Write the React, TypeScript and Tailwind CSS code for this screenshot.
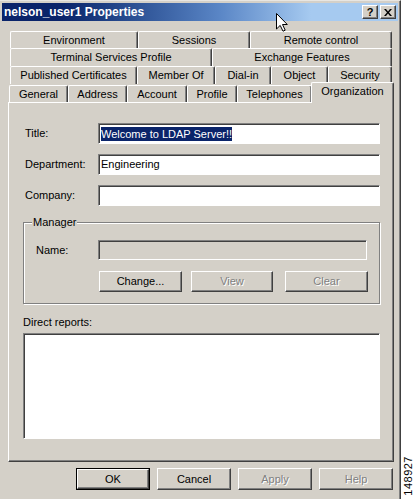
import React from 'react';

const raised =
  'border border-t-white border-l-white border-r-[#404040] border-b-[#404040] shadow-[inset_-1px_-1px_#808080]';
const sunken =
  'border border-t-[#808080] border-l-[#808080] border-r-white border-b-white shadow-[inset_1px_1px_#404040]';
const grayed = 'text-[#808080] [text-shadow:1px_1px_0_#fff]';

const tabBase =
  'flex items-center justify-center border-t border-l border-r border-t-white border-l-white border-r-[#404040] shadow-[inset_-1px_0_#808080] rounded-t-[2px] bg-[#d4d0c8]';

const tabRows = [
  [
    { label: 'Environment', w: 'w-[128px]' },
    { label: 'Sessions', w: 'w-[112px]' },
    { label: 'Remote control', w: 'w-[142px]' },
  ],
  [
    { label: 'Terminal Services Profile', w: 'w-[202px]' },
    { label: 'Exchange Features', w: 'w-[180px]' },
  ],
  [
    { label: 'Published Certificates', w: 'w-[127px]' },
    { label: 'Member Of', w: 'w-[78px]' },
    { label: 'Dial-in', w: 'w-[56px]' },
    { label: 'Object', w: 'w-[57px]' },
    { label: 'Security', w: 'w-[64px]' },
  ],
];

const frontTabs = [
  { label: 'General', w: 'w-[59px]' },
  { label: 'Address', w: 'w-[59px]' },
  { label: 'Account', w: 'w-[60px]' },
  { label: 'Profile', w: 'w-[50px]' },
  { label: 'Telephones', w: 'w-[75px]' },
];

const Cursor = () => (
  <svg width="12" height="19" viewBox="0 0 12 19" className="absolute left-[276px] top-[12px]">
    <path
      d="M0.5 0.5 L0.5 16 L4.2 12.4 L7 18.2 L9.2 17.2 L6.5 11.5 L11.3 11.5 Z"
      fill="#fff"
      stroke="#000"
      strokeWidth="1"
      strokeLinejoin="miter"
    />
  </svg>
);

const Button = ({
  label,
  w,
  disabled,
  isDefault,
}: {
  label: string;
  w: string;
  disabled?: boolean;
  isDefault?: boolean;
}) => (
  <div className={`${w} h-full ${isDefault ? 'border border-black' : ''}`}>
    <div
      className={`h-full flex items-center justify-center ${raised} ${disabled ? grayed : 'text-black'}`}
    >
      {label}
    </div>
  </div>
);

export default function App() {
  return (
    <div
      className="flex w-[415px] h-[499px] bg-white overflow-hidden text-[11px] text-black"
      style={{ fontFamily: '"Liberation Sans", Arial, sans-serif' }}
    >
      <div className="relative w-[401px] h-[499px] shrink-0 bg-[#d4d0c8] border-t border-t-[#e8e6e2] border-r border-r-[#404040] shadow-[inset_-1px_0_#808080]">
        {/* title bar */}
        <div className="mt-[2px] ml-[2px] w-[396px] h-[18px] flex items-center justify-between bg-linear-to-r from-[#0a246a] from-15% via-[#5a86c6] via-55% to-[#a6caf0] to-78% pl-[2px] pr-[2px]">
          <span className="text-white font-bold text-[12px] leading-none">nelson_user1 Properties</span>
          <div className="flex gap-[2px]">
            <div className={`w-[16px] h-[14px] bg-[#d4d0c8] flex items-center justify-center font-bold text-[11px] leading-none ${raised}`}>
              ?
            </div>
            <div className={`w-[16px] h-[14px] bg-[#d4d0c8] flex items-center justify-center ${raised}`}>
              <svg width="8" height="7" viewBox="0 0 8 7">
                <path d="M0 0 L2 0 L4 2.5 L6 0 L8 0 L5 3.5 L8 7 L6 7 L4 4.5 L2 7 L0 7 L3 3.5 Z" fill="#000" />
              </svg>
            </div>
          </div>
        </div>

        <Cursor />

        {/* tabs */}
        <div className="mt-[10px]">
          {tabRows.map((row, i) => (
            <div key={i} className={`flex ml-[10px] ${i === 0 ? 'h-[17px]' : 'h-[18px]'}`}>
              {row.map((t) => (
                <div key={t.label} className={`${tabBase} ${t.w} h-full`}>
                  {t.label}
                </div>
              ))}
            </div>
          ))}
          <div className="flex items-end h-[18px] ml-[9px]">
            {frontTabs.map((t) => (
              <div key={t.label} className={`${tabBase} ${t.w} h-[17px]`}>
                {t.label}
              </div>
            ))}
            <div className={`${tabBase} relative z-10 w-[83px] h-[21px] -mb-px -ml-[1px] pb-[3px]`}>
              Organization
            </div>
          </div>
        </div>

        {/* panel */}
        <div className={`ml-[8px] w-[386px] h-[360px] pt-[20px] pl-[14px] pr-[13px] ${raised}`}>
          {[
            { label: 'Title:', value: 'Welcome to LDAP Server!!', selected: true },
            { label: 'Department:', value: 'Engineering' },
            { label: 'Company:', value: '' },
          ].map((f, i) => (
            <div key={f.label} className={`flex items-center h-[21px] ${i > 0 ? 'mt-[10px]' : ''}`}>
              <span className="w-[75px] pl-[2px]">{f.label}</span>
              <div className={`flex-1 h-full bg-white flex items-center pl-[2px] ${sunken}`}>
                {f.selected ? (
                  <span className="bg-[#0a246a] text-white leading-[14px]">{f.value}</span>
                ) : (
                  <span>{f.value}</span>
                )}
              </div>
            </div>
          ))}

          {/* manager group */}
          <div className="relative mt-[16px] h-[82px] border border-[#808080] shadow-[1px_1px_0_#fff,inset_1px_1px_0_#fff] pt-[17px]">
            <span className="absolute -top-[8px] left-[8px] px-[1px] bg-[#d4d0c8] leading-[14px]">Manager</span>
            <div className="flex items-center h-[20px] pr-[12px]">
              <span className="w-[74px] pl-[12px]">Name:</span>
              <div className={`flex-1 h-full ${sunken}`} />
            </div>
            <div className="flex h-[21px] mt-[11px] pl-[75px]">
              <Button label="Change..." w="w-[83px]" />
              <div className="w-[9px]" />
              <Button label="View" w="w-[82px]" disabled />
              <div className="w-[12px]" />
              <Button label="Clear" w="w-[83px]" disabled />
            </div>
          </div>

          <div className="mt-[12px] leading-[13px]">Direct reports:</div>
          <div className={`mt-[4px] h-[106px] bg-white ${sunken}`} />
        </div>

        {/* footer buttons */}
        <div className="flex justify-end gap-[7px] ml-[8px] w-[386px] h-[22px] mt-[6px] pr-[1px]">
          <Button label="OK" w="w-[74px]" isDefault />
          <Button label="Cancel" w="w-[74px]" />
          <Button label="Apply" w="w-[74px]" disabled />
          <Button label="Help" w="w-[74px]" disabled />
        </div>
      </div>

      <div className="flex-1 flex items-end justify-center pb-[3px]">
        <span className="[writing-mode:vertical-rl] rotate-180 text-[11px] leading-none tracking-[0.5px]">148927</span>
      </div>
    </div>
  );
}
